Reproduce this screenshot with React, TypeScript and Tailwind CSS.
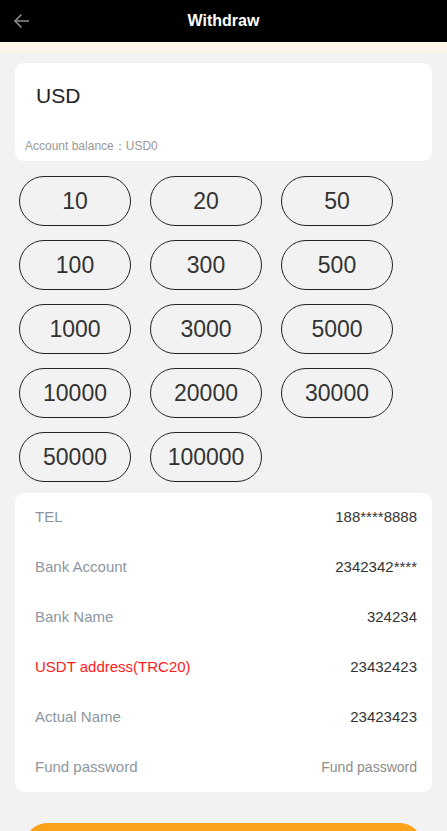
import React from "react";

const amounts = ["10", "20", "50", "100", "300", "500", "1000", "3000", "5000", "10000", "20000", "30000", "50000", "100000"];

const rows = [
    { label: "TEL", value: "188****8888" },
    { label: "Bank Account", value: "2342342****" },
    { label: "Bank Name", value: "324234" },
    { label: "USDT address(TRC20)", value: "23432423", red: true },
    { label: "Actual Name", value: "23423423" },
    { label: "Fund password", value: "Fund password", placeholder: true },
];

export default function App() {
    return (
        <div className="min-h-[831px] bg-[#f2f2f2] font-[family-name:'Liberation_Sans',Arial,sans-serif]">
            <div className="h-[42px] bg-black flex items-center relative">
                <svg className="absolute left-[13px] top-[13px]" width="17" height="16" viewBox="0 0 17 16" fill="none" stroke="#8a8a8a" strokeWidth="1.6">
                    <path d="M16 8H2" />
                    <path d="M8.5 1.5L2 8l6.5 6.5" />
                </svg>
                <div className="w-full text-center text-white font-bold text-[16px]">Withdraw</div>
            </div>
            <div className="h-[11px] bg-[#fdf5e7]" />

            <div className="px-[15px] pt-[10px]">
                <div className="bg-white rounded-[9px] h-[98px] flex flex-col">
                    <div className="pl-[21px] pt-[20px] text-[21px] text-[#222] leading-[26px]">USD</div>
                    <div className="mt-auto pl-[10px] pb-[6px] text-[12px] text-[#999]">Account balance：USD0</div>
                </div>
            </div>

            <div className="grid grid-cols-[112px_112px_112px] gap-x-[19px] gap-y-[14px] pl-[19px] pt-[15px]">
                {amounts.map((a) => (
                    <div key={a} className="h-[50px] rounded-[25px] border border-[#222] flex items-center justify-center text-[23px] text-[#333]">
                        {a}
                    </div>
                ))}
            </div>

            <div className="px-[15px] pt-[11px]">
                <div className="bg-white rounded-[9px] h-[299px] pl-[20px] pr-[15px]">
                    {rows.map((r) => (
                        <div key={r.label} className="h-[50px] pb-[2px] flex items-center justify-between text-[15px]">
                            <span className={r.red ? "text-[#ff1a1a]" : "text-[#8c96a0]"}>{r.label}</span>
                            <span className={r.placeholder ? "text-[#8c8c8c] text-[14px]" : "text-[#333]"}>{r.value}</span>
                        </div>
                    ))}
                </div>
            </div>

            <div className="px-[25px] pt-[31px]">
                <div className="h-[44px] rounded-full bg-[#f9a21a]" />
            </div>
        </div>
    );
}
